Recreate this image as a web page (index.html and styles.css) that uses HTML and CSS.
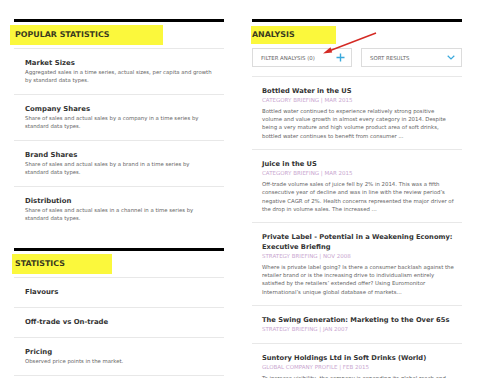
FILE: index.html
```html
<!DOCTYPE html>
<html>
<head>
<meta charset="utf-8">
<link rel="stylesheet" href="styles.css">
</head>
<body>
<div class="page">
  <div class="col">
    <section class="section">
      <div class="head"><span class="hl hl-popular">POPULAR STATISTICS</span></div>
      <div class="stat">
        <div class="stat-title">Market Sizes</div>
        <div class="stat-desc">Aggregated sales in a time series, actual sizes, per capita and growth by standard data types.</div>
      </div>
      <div class="stat">
        <div class="stat-title">Company Shares</div>
        <div class="stat-desc">Share of sales and actual sales by a company in a time series by standard data types.</div>
      </div>
      <div class="stat">
        <div class="stat-title">Brand Shares</div>
        <div class="stat-desc">Share of sales and actual sales by a brand in a time series by standard data types.</div>
      </div>
      <div class="stat last">
        <div class="stat-title">Distribution</div>
        <div class="stat-desc">Share of sales and actual sales in a channel in a time series by standard data types.</div>
      </div>
    </section>
    <section class="section second">
      <div class="head"><span class="hl hl-stats">STATISTICS</span></div>
      <div class="stat single">
        <div class="stat-title">Flavours</div>
      </div>
      <div class="stat single">
        <div class="stat-title">Off-trade vs On-trade</div>
      </div>
      <div class="stat">
        <div class="stat-title">Pricing</div>
        <div class="stat-desc">Observed price points in the market.</div>
      </div>
    </section>
  </div>

  <div class="col">
    <section class="section">
      <div class="head plain"><span class="hl hl-analysis">ANALYSIS</span></div>
      <div class="controls">
        <div class="ctrl">
          <span>FILTER ANALYSIS (0)</span>
          <svg width="9" height="9" viewBox="0 0 9 9"><path d="M4.5 0.5v8M0.5 4.5h8" stroke="#3aa9dc" stroke-width="1.4" fill="none"/></svg>
        </div>
        <div class="ctrl">
          <span>SORT RESULTS</span>
          <svg width="8" height="5" viewBox="0 0 8 5"><path d="M0.7 0.8l3.3 3.2 3.3-3.2" stroke="#3aa9dc" stroke-width="1.2" fill="none"/></svg>
        </div>
      </div>
      <div class="article">
        <div class="a-title">Bottled Water in the US</div>
        <div class="a-meta">CATEGORY BRIEFING | MAR 2015</div>
        <div class="a-desc">Bottled water continued to experience relatively strong positive volume and value growth in almost every category in 2014. Despite being a very mature and high volume product area of soft drinks, bottled water continues to benefit from consumer ...</div>
      </div>
      <div class="article">
        <div class="a-title">Juice in the US</div>
        <div class="a-meta">CATEGORY BRIEFING | MAR 2015</div>
        <div class="a-desc">Off-trade volume sales of juice fell by 2% in 2014. This was a fifth consecutive year of decline and was in line with the review period’s negative CAGR of 2%. Health concerns represented the major driver of the drop in volume sales. The increased ...</div>
      </div>
      <div class="article">
        <div class="a-title">Private Label - Potential in a Weakening Economy: Executive Briefing</div>
        <div class="a-meta">STRATEGY BRIEFING | NOV 2008</div>
        <div class="a-desc">Where is private label going? Is there a consumer backlash against the retailer brand or is the increasing drive to individualism entirely satisfied by the retailers’ extended offer? Using Euromonitor International’s unique global database of markets...</div>
      </div>
      <div class="article short">
        <div class="a-title">The Swing Generation: Marketing to the Over 65s</div>
        <div class="a-meta">STRATEGY BRIEFING | JAN 2007</div>
      </div>
      <div class="article">
        <div class="a-title">Suntory Holdings Ltd in Soft Drinks (World)</div>
        <div class="a-meta">GLOBAL COMPANY PROFILE | FEB 2015</div>
        <div class="a-desc">To increase visibility, the company is expanding its global reach and growing its presence in soft drinks worldwide.</div>
      </div>
    </section>
  </div>

  <svg class="arrow" width="60" height="30" viewBox="0 0 60 30">
    <path d="M55 2 L8 20" stroke="#d42a24" stroke-width="1.4" fill="none"/>
    <path d="M2 22.5 L9.5 16.2 L11.2 21.6 Z" fill="#d42a24"/>
  </svg>
</div>
</body>
</html>
```
FILE: styles.css
```css
* { box-sizing: border-box; }
html, body { margin: 0; padding: 0; background: #fff; }
body {
  font-family: "DejaVu Sans", Verdana, sans-serif;
  color: #333;
  width: 482px;
  height: 378px;
  overflow: hidden;
}
.page {
  position: relative;
  display: grid;
  grid-template-columns: 210px 210px;
  column-gap: 28px;
  padding: 19px 0 0 14px;
}
.section {
  border-top: 3px solid #000;
}
.second { margin-top: 16px; }
.head {
  height: 27px;
  border-bottom: 1px solid #e8e8e8;
}
.head.plain { border-bottom: none; height: 26px; }
.hl {
  display: inline-block;
  height: 20px;
  line-height: 20px;
  margin-top: 1px;
  background: #fbf83c;
  font-weight: bold;
  font-size: 7.9px;
  color: #3a3a1e;
}
.hl-popular { margin-left: -4px; padding-left: 5px; width: 153px; }
.hl-stats { margin-left: -2px; padding-left: 3px; width: 100px; margin-top: 2px; }
.hl-analysis { margin-left: -1px; padding-left: 1px; width: 85px; margin-top: 2px; height: 18px; line-height: 18px; }

.stat {
  padding: 8.5px 10px 9.5px 11px;
  border-bottom: 1px solid #e8e8e8;
}
.stat.last { border-bottom: none; }
.stat.single { padding: 9px 10px 9px 11px; }
.stat-title {
  font-weight: bold;
  font-size: 6.9px;
  line-height: 10px;
  color: #333;
}
.single .stat-title { line-height: 11px; }
.stat-desc {
  font-size: 5.35px;
  line-height: 8.5px;
  color: #666;
}

.controls {
  display: flex;
  justify-content: space-between;
  padding-bottom: 9px;
  border-bottom: 1px solid #e8e8e8;
}
.ctrl {
  width: 100px;
  height: 19px;
  border: 1px solid #dcdcdc;
  display: flex;
  align-items: center;
  justify-content: space-between;
  padding: 0 6px 0 8px;
  font-size: 5.4px;
  color: #666;
}
.ctrl + .ctrl { width: 101px; }

.article {
  padding: 9.5px 8px 9px 10px;
  border-bottom: 1px solid #e8e8e8;
}
.article.short { padding-bottom: 9px; }
.a-title {
  font-weight: bold;
  font-size: 6.7px;
  line-height: 9.6px;
  color: #333;
}
.a-meta {
  font-size: 5.5px;
  line-height: 9px;
  color: #c9a6cf;
}
.a-desc {
  margin-top: 1.5px;
  font-size: 5.4px;
  line-height: 8.4px;
  color: #666;
}

.arrow {
  position: absolute;
  left: 321px;
  top: 31px;
}
```
